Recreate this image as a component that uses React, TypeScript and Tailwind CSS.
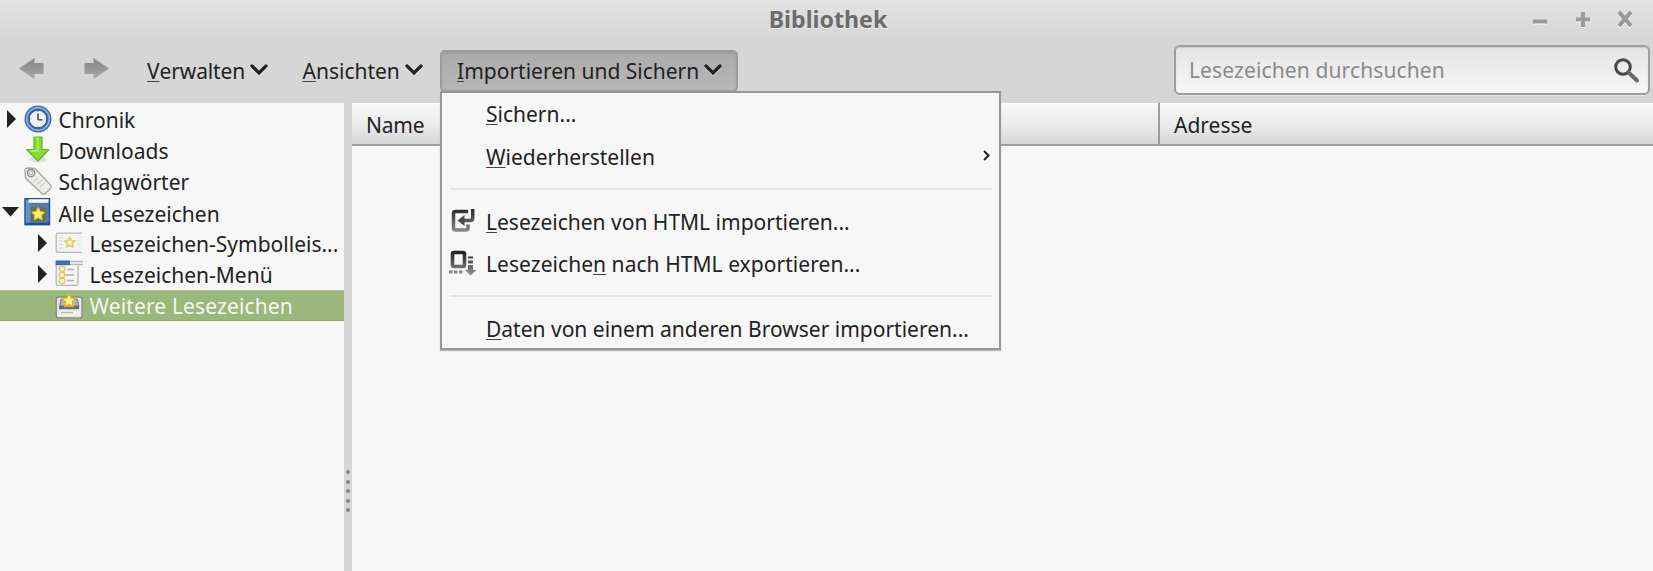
import type { ReactNode } from "react";

const STAR = "M12 2.5l2.9 6.1 6.6.9-4.8 4.6 1.2 6.6-5.9-3.2-5.9 3.2 1.2-6.6L2.5 9.5l6.6-.9z";

function Key({ children }: { children: ReactNode }) {
  return (
    <span className="underline decoration-[#444] decoration-1 underline-offset-2 [text-decoration-skip-ink:none]">
      {children}
    </span>
  );
}

function Chevron() {
  return (
    <svg width="18" height="12" viewBox="0 0 18 12" className="mb-[2px] ml-auto shrink-0 drop-shadow-[0_1px_0_#ffffff80]">
      <path d="M2 2l7 7 7-7" fill="none" stroke="#222" strokeWidth="3.2" strokeLinecap="round" strokeLinejoin="miter" />
    </svg>
  );
}

function NavArrow({ forward = false }: { forward?: boolean }) {
  return (
    <svg width="25" height="21" viewBox="0 0 25 21" className={forward ? "-scale-x-100" : ""}>
      <defs>
        <linearGradient id="nav" x1="0" y1="0" x2="0" y2="1">
          <stop offset="0" stopColor="#858585" />
          <stop offset="1" stopColor="#a8a8a8" />
        </linearGradient>
      </defs>
      <path d="M0 10.500L15.500 0v5H24.500v11h-9v5z" fill="url(#nav)" />
    </svg>
  );
}

function Twisty({ open = false }: { open?: boolean }) {
  return open ? (
    <svg width="17" height="10" viewBox="0 0 17 10">
      <path d="M0 0h17L8.500 9.500z" fill="#222" />
    </svg>
  ) : (
    <svg width="9" height="18" viewBox="0 0 9 18">
      <path d="M0 0l9 9-9 9z" fill="#222" />
    </svg>
  );
}

function ClockIcon() {
  return (
    <svg width="28" height="28" viewBox="0 0 28 28">
      <circle cx="14" cy="14" r="13.500" fill="#3b69ab" />
      <circle cx="14" cy="14" r="11.300" fill="none" stroke="#8cb0dc" strokeWidth="1.700" />
      <circle cx="14" cy="14" r="8.800" fill="#f4f4f2" stroke="#2c5592" strokeWidth="1" />
      <path d="M14 8.500v6l4.500.5" fill="none" stroke="#555" strokeWidth="1.700" />
      <path d="M14 6v1M14 21v1M6.500 14h1M20.500 14h1" stroke="#888" strokeWidth="1" />
    </svg>
  );
}

function DownloadIcon() {
  return (
    <svg width="28" height="28" viewBox="0 0 28 28">
      <ellipse cx="14" cy="23.500" rx="9" ry="3" fill="#dedede" />
      <path d="M10 1h8v12.500h7L14 25 2.500 13.500H10z" fill="#84dc30" stroke="#62b820" strokeWidth="1.200" strokeLinejoin="round" />
      <path d="M12 2.500h2v12.500H6.500" fill="none" stroke="#b4ec7c" strokeWidth="1.300" />
    </svg>
  );
}

function TagIcon() {
  return (
    <svg width="28" height="28" viewBox="0 0 28 28">
      <path d="M1 3.500Q1 1 4 1l7 .5L27 18.500v2.500l-6 6h-2.500L1.500 11z" fill="#ececea" stroke="#a6a6a2" strokeWidth="1.300" strokeLinejoin="round" />
      <circle cx="7" cy="6" r="3.600" fill="none" stroke="#8c8c88" strokeWidth="1.500" />
      <circle cx="7" cy="6" r="1.700" fill="#fafafa" stroke="#aaa" strokeWidth=".8" />
      <path d="M10 14.500l4-3.500M13 17.500l5-4.500M16 20l4.500-4" stroke="#cacac6" strokeWidth="1.200" />
    </svg>
  );
}

function BookIcon() {
  return (
    <svg width="28" height="28" viewBox="0 0 28 28">
      <rect x="1" y=".7" width="24.500" height="26" fill="#4c7cb9" stroke="#234f91" strokeWidth="1.400" />
      <path d="M5 1.200h19.500v3.500H4z" fill="#fbfbfb" />
      <path d="M2.700 2v23M5 6v19.500" stroke="#81a9d8" strokeWidth="1.100" />
      <path d="M1.500 25.500h24" stroke="#234f91" strokeWidth="1.500" />
      <rect x="7" y="9" width="14.500" height="14" rx="1" fill="#7d6d1f" opacity=".85" />
      <path d={STAR} transform="translate(6.500 8.200) scale(.64)" fill="#fdf08a" stroke="#f0d53a" strokeWidth="2" strokeLinejoin="round" />
    </svg>
  );
}

function ToolbarFolderIcon() {
  return (
    <svg width="28" height="28" viewBox="0 0 28 28">
      <path d="M27 4.200H3.500Q1.200 4.200 1.200 6.500v14.500q0 2.300 2.300 2.300H27" fill="#f4f4f3" stroke="#b5b5b2" strokeWidth="1.300" />
      <path d="M4.500 8.500h3M4.500 12h3M4.500 15.500h3M4.500 19h3" stroke="#c8c8c6" strokeWidth="1" />
      <path d={STAR} transform="translate(8.300 6.800) scale(.54)" fill="#fbf5cd" stroke="#e4c964" strokeWidth="3" strokeLinejoin="round" />
      <path d="M22 8.500h4M22 12h4M22 15.500h4" stroke="#e8e8e6" />
    </svg>
  );
}

function MenuFolderIcon() {
  return (
    <svg width="28" height="28" viewBox="0 0 28 28">
      <path d="M1 1.500h27M1 4.500h27" stroke="#b6b6b4" strokeWidth="1.400" />
      <rect x="1" y="1" width="13.500" height="4" fill="#4372b4" stroke="#2d5a9c" strokeWidth=".8" />
      <path d="M1.200 5.500v18.300q0 1.500 1.500 1.500h19q1.300 0 1.300-1.500V5.500" fill="#f6f6f5" stroke="#b5b5b2" strokeWidth="1.300" />
      <g fill="#fcf4c8" stroke="#dfc465" strokeWidth="1.300">
        <circle cx="7" cy="9" r="2.800" />
        <circle cx="7" cy="15" r="2.800" />
        <circle cx="7" cy="21" r="2.800" />
      </g>
      <path d="M12 9.500h7M10.500 15h8.500M12 20.500h7" stroke="#b0b0ae" strokeWidth="1.300" />
    </svg>
  );
}

function UnsortedIcon() {
  return (
    <svg width="28" height="28" viewBox="0 0 28 28">
      <rect x="1.200" y="6" width="26" height="21" rx="2.500" fill="#e4e4e1" stroke="#8d8d88" strokeWidth="1.500" />
      <path d="M6 8.500h16.500l1.500 8H4.500z" fill="#b5b5b2" stroke="#777" />
      <path d="M4 14.500h5l1.500 2h7l1.500-2h5v4H4z" fill="#6c6c6a" />
      <rect x="3.500" y="18.500" width="21.500" height="6.500" fill="#efefec" />
      <path d="M6 21.500h12" stroke="#b5b5b2" strokeWidth="1.300" />
      <path d={STAR} transform="translate(5.200 .6) scale(.73)" fill="#fdf29a" stroke="#dfb520" strokeWidth="2" strokeLinejoin="round" />
    </svg>
  );
}

function ImportIcon() {
  return (
    <svg width="28" height="28" viewBox="0 0 28 28">
      <defs>
        <linearGradient id="imp" x1="0" y1="3" x2="0" y2="25" gradientUnits="userSpaceOnUse">
          <stop offset="0" stopColor="#2c2c2c" />
          <stop offset="1" stopColor="#8b8b8b" />
        </linearGradient>
      </defs>
      <g fill="none" stroke="url(#imp)" strokeWidth="3.500">
        <path d="M19 4.500H6.500Q4.500 4.500 4.500 6.500v14.500q0 2 2 2H17q2 0 2-2V17.500" />
        <path d="M23.700 2v9q0 2.500-2.500 2.500H13" />
      </g>
      <path d="M8.500 13.500l7-5.500v11z" fill="#4b4b4b" />
    </svg>
  );
}

function ExportIcon() {
  return (
    <svg width="28" height="28" viewBox="0 0 28 28">
      <defs>
        <linearGradient id="exp" x1="0" y1="2" x2="0" y2="26" gradientUnits="userSpaceOnUse">
          <stop offset="0" stopColor="#222" />
          <stop offset="1" stopColor="#999" />
        </linearGradient>
      </defs>
      <rect x="3.500" y="2.500" width="12" height="14" rx="1.500" fill="none" stroke="url(#exp)" strokeWidth="3.600" />
      <path d="M0 20.500h3.500v3H0zM5 20.500h3.500v3H5zM10 20.500h3.500v3H10zM19 6.500h5v2h-5zM19 10.500h5v3h-5zM19 15h5v5h3.500l-6 5.500L16 20h3z" fill="url(#exp)" />
    </svg>
  );
}

type TreeProps = {
  icon: ReactNode;
  label: string;
  twisty?: "open" | "closed";
  nested?: boolean;
  selected?: boolean;
};

function TreeRow({ icon, label, twisty, nested, selected }: TreeProps) {
  return (
    <div
      className={`flex h-[31.15px] items-center ${nested ? "pl-[31px]" : ""} ${
        selected
          ? "bg-[#9ab87c] tracking-[0.13px] text-[#f5f5f5] shadow-[inset_0_1px_0_#a6c18b,inset_0_-1px_0_#8fac72]"
          : ""
      }`}
    >
      <span className={`flex w-6 shrink-0 items-center ${twisty === "open" ? "pl-[2px]" : "pl-[7px]"}`}>
        {twisty && <Twisty open={twisty === "open"} />}
      </span>
      <span className="w-[34.5px] shrink-0">{icon}</span>
      <span className={`whitespace-nowrap ${nested ? "pt-px" : "pt-[3px]"}`}>{label}</span>
    </div>
  );
}

type ItemProps = { icon?: ReactNode; children: ReactNode; submenu?: boolean; className?: string };

function MenuItem({ icon, children, submenu, className = "" }: ItemProps) {
  return (
    <div className="flex h-[42.5px] items-center pl-[6px] pr-[9px]">
      <span className="w-[37px] shrink-0">{icon}</span>
      <span className={`flex-1 whitespace-nowrap ${className}`}>{children}</span>
      {submenu && (
        <svg width="7" height="11" viewBox="0 0 7 11" className="mb-[2px]">
          <path d="M1 1l4.500 4.500L1 10" fill="none" stroke="#222" strokeWidth="2" />
        </svg>
      )}
    </div>
  );
}

function Separator() {
  return (
    <div className="flex h-[22px] items-center px-[7px]">
      <div className="h-[2px] w-full bg-[#e5e5e5]" />
    </div>
  );
}

export default function App() {
  return (
    <div className="flex h-[571px] w-[1653px] flex-col overflow-hidden bg-[#d6d6d6] font-['Noto_Sans',sans-serif] text-[21px] leading-[30px] text-[#222]">
      <header className="grid h-[40px] shrink-0 grid-cols-[1fr_auto_1fr] items-center bg-linear-to-b from-[#e3e3e3] to-[#d6d6d6]">
        <span />
        <h1 className="pb-[3px] pl-[3px] text-[23.2px] font-bold text-[#6c6c6c] [text-shadow:0_1px_0_#eee]">Bibliothek</h1>
        <div className="flex items-center justify-end gap-[28.5px] pb-[2px] pr-[21px]">
          <svg width="14" height="18" viewBox="0 0 14 18" className="drop-shadow-[0_1px_0_#fff]">
            <path d="M0 11.500h14" stroke="#999" strokeWidth="4" />
          </svg>
          <svg width="14" height="18" viewBox="0 0 14 18" className="drop-shadow-[0_1px_0_#fff]">
            <path d="M0 9.500h14M7 2v15" stroke="#999" strokeWidth="4" />
          </svg>
          <svg width="14" height="18" viewBox="0 0 14 18" className="drop-shadow-[0_1px_0_#fff]">
            <path d="M1 2l12 14M13 2L1 16" stroke="#999" strokeWidth="4" />
          </svg>
        </div>
      </header>

      <div className="flex h-[63px] shrink-0 items-start">
        <div className="flex items-center gap-[40px] pl-[19px] pt-[18px]">
          <NavArrow />
          <NavArrow forward />
        </div>
        <div className="ml-[38px] flex h-[41px] w-[121px] items-center pt-[20px] tracking-[-0.12px]">
          <Key>V</Key>erwalten
          <Chevron />
        </div>
        <div className="ml-[34.5px] flex h-[41px] w-[120.5px] items-center pt-[20px]">
          <Key>A</Key>nsichten
          <Chevron />
        </div>
        <div className="relative ml-[17px] mt-[10px] h-[42px] w-[298px]">
          <div className="flex h-[42px] items-center whitespace-nowrap rounded-[5px] border-2 border-[#9c9c9c] bg-linear-to-b from-[#ababab] to-[#b7b7b7] pl-[15px] pr-[14px] shadow-[inset_0_2px_2px_#a0a0a0]">
            <Key>I</Key>mportieren und Sichern
            <Chevron />
          </div>
          <div className="absolute left-0 top-[41px] z-10 h-[259px] w-[561px] border-2 border-[#979797] bg-[#f7f7f7] pl-px shadow-[0_1px_1px_#bbb]">
            <MenuItem>
              <Key>S</Key>ichern...
            </MenuItem>
            <MenuItem submenu>
              <Key>W</Key>iederherstellen
            </MenuItem>
            <Separator />
            <MenuItem icon={<ImportIcon />} className="pt-[2px]">
              <Key>L</Key>esezeichen von HTML importieren...
            </MenuItem>
            <MenuItem icon={<ExportIcon />} className="tracking-[0.05px]">
              Lesezeiche<Key>n</Key> nach HTML exportieren...
            </MenuItem>
            <Separator />
            <MenuItem className="pt-[2px]">
              <Key>D</Key>aten von einem anderen Browser importieren...
            </MenuItem>
          </div>
        </div>
        <div className="ml-auto mr-[3px] mt-[5px] flex h-[50px] w-[476px] items-center justify-between rounded-[6px] border-2 border-[#9d9d9d] bg-linear-to-b from-[#e4e4e4] to-[#f7f7f7] pl-[13px] pr-[8px] text-[#8a8a8a] shadow-[0_1px_0_#e4e4e4,inset_0_1px_1px_#ccc]">
          <span className="tracking-[0.12px]">Lesezeichen durchsuchen</span>
          <svg width="28" height="28" viewBox="0 0 28 28">
            <circle cx="11" cy="11" r="7.300" fill="none" stroke="#484848" strokeWidth="3" />
            <path d="M16.500 16.500l8.500 8" stroke="#686868" strokeWidth="4" strokeLinecap="round" />
          </svg>
        </div>
      </div>

      <main className="flex min-h-0 flex-1">
        <nav className="w-[344px] shrink-0 bg-[#f7f7f7]">
          <TreeRow twisty="closed" icon={<ClockIcon />} label="Chronik" />
          <TreeRow icon={<DownloadIcon />} label="Downloads" />
          <TreeRow icon={<TagIcon />} label="Schlagwörter" />
          <TreeRow twisty="open" icon={<BookIcon />} label="Alle Lesezeichen" />
          <TreeRow nested twisty="closed" icon={<ToolbarFolderIcon />} label="Lesezeichen-Symbolleis..." />
          <TreeRow nested twisty="closed" icon={<MenuFolderIcon />} label="Lesezeichen-Menü" />
          <TreeRow nested selected icon={<UnsortedIcon />} label="Weitere Lesezeichen" />
        </nav>
        <div className="flex w-[8px] shrink-0 flex-col items-center gap-[5.5px] bg-[#d6d6d6] pt-[367px]">
          {[0, 1, 2, 3, 4].map((n) => (
            <span key={n} className="size-[4px] shrink-0 rounded-full bg-[#858585]" />
          ))}
        </div>
        <section className="flex-1 bg-[#f7f7f7]">
          <div className="flex h-[43px] items-center border-b-2 border-[#9c9c9c] bg-linear-to-b from-[#f8f8f8] via-[#ececec] via-50% to-[#d7d7d7] shadow-[inset_0_1px_0_#fff]">
            <span className="flex h-full w-[808px] items-center border-r-2 border-[#9c9c9c] pl-[14px] pt-[3px] tracking-[-0.2px]">
              Name
            </span>
            <span className="pl-[14px] pt-[3px]">Adresse</span>
          </div>
        </section>
      </main>
    </div>
  );
}
